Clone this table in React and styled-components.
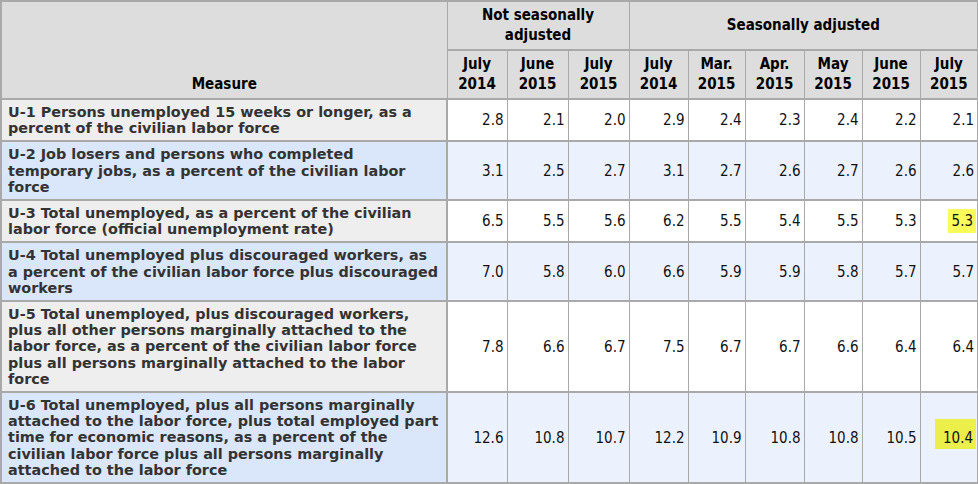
import React from 'react';
import styled, { createGlobalStyle } from 'styled-components';

const GlobalStyle = createGlobalStyle`
  body {
    margin: 0;
    background: #ffffff;
    font-family: 'DejaVu Sans Condensed', 'DejaVu Sans', sans-serif;
  }
`;

const Table = styled.table`
  width: 977px;
  table-layout: fixed;
  border-collapse: collapse;
  border: 2px solid #a9a9a9;
  font-family: 'DejaVu Sans Condensed', 'DejaVu Sans', sans-serif;
`;

const HeadCell = styled.th`
  background: #dddddd;
  border: 1px solid #a9a9a9;
  border-bottom-width: 2px;
  color: #000;
  font-size: 15px;
  font-weight: 700;
  line-height: 20px;
  padding: 3px 2px 4px;
  text-align: center;
  vertical-align: ${(p) => (p.$bottom ? 'bottom' : 'middle')};
`;

const LabelCell = styled.th`
  background: ${(p) => (p.$alt ? '#dae7fb' : '#eeeeee')};
  border: 1px solid #a9a9a9;
  border-top-width: 2px;
  border-right-width: 2px;
  color: #333333;
  font-family: 'DejaVu Sans', sans-serif;
  font-size: 14.4px;
  font-weight: 700;
  line-height: 16.2px;
  padding: 4px 5px 4px 6px;
  text-align: left;
  vertical-align: top;
`;

const ValueCell = styled.td`
  background: ${(p) => (p.$alt ? '#ecf2fd' : '#ffffff')};
  border: 1px solid #a9a9a9;
  border-top-width: 2px;
  color: #111111;
  font-size: 15px;
  line-height: 16px;
  padding: 4px 3px 4px 2px;
  text-align: right;
  vertical-align: middle;
`;

const Highlight = styled.span`
  display: inline-block;
  background: ${(p) => p.$tone};
  padding: ${(p) => (p.$tall ? '11px 3px 3px 8px' : '4px 3px 4px 4px')};
  margin-top: ${(p) => (p.$tall ? '-8px' : '0')};
  margin-right: -2px;
`;

const groups = [
  { label: 'Not seasonally adjusted', span: 3 },
  { label: 'Seasonally adjusted', span: 6 },
];

const months = [
  ['July', '2014'],
  ['June', '2015'],
  ['July', '2015'],
  ['July', '2014'],
  ['Mar.', '2015'],
  ['Apr.', '2015'],
  ['May', '2015'],
  ['June', '2015'],
  ['July', '2015'],
];

const widths = [446, 60, 61, 61, 59, 57, 59, 58, 58, 58];

const rows = [
  {
    label: 'U-1 Persons unemployed 15 weeks or longer, as a percent of the civilian labor force',
    values: ['2.8', '2.1', '2.0', '2.9', '2.4', '2.3', '2.4', '2.2', '2.1'],
  },
  {
    label: 'U-2 Job losers and persons who completed temporary jobs, as a percent of the civilian labor force',
    values: ['3.1', '2.5', '2.7', '3.1', '2.7', '2.6', '2.7', '2.6', '2.6'],
  },
  {
    label: 'U-3 Total unemployed, as a percent of the civilian labor force (official unemployment rate)',
    values: ['6.5', '5.5', '5.6', '6.2', '5.5', '5.4', '5.5', '5.3', '5.3'],
    mark: { tone: '#fbfb5c', tall: false },
  },
  {
    label: 'U-4 Total unemployed plus discouraged workers, as a percent of the civilian labor force plus discouraged workers',
    values: ['7.0', '5.8', '6.0', '6.6', '5.9', '5.9', '5.8', '5.7', '5.7'],
  },
  {
    label: 'U-5 Total unemployed, plus discouraged workers, plus all other persons marginally attached to the labor force, as a percent of the civilian labor force plus all persons marginally attached to the labor force',
    values: ['7.8', '6.6', '6.7', '7.5', '6.7', '6.7', '6.6', '6.4', '6.4'],
  },
  {
    label: 'U-6 Total unemployed, plus all persons marginally attached to the labor force, plus total employed part time for economic reasons, as a percent of the civilian labor force plus all persons marginally attached to the labor force',
    values: ['12.6', '10.8', '10.7', '12.2', '10.9', '10.8', '10.8', '10.5', '10.4'],
    mark: { tone: '#ecef4a', tall: true },
  },
];

export default function App() {
  return (
    <>
      <GlobalStyle />
      <Table>
        <colgroup>
          {widths.map((w, i) => (
            <col key={i} style={{ width: w }} />
          ))}
        </colgroup>
        <thead>
          <tr>
            <HeadCell rowSpan={2} $bottom>Measure</HeadCell>
            {groups.map((g) => (
              <HeadCell key={g.label} colSpan={g.span}>
                {g.label === 'Not seasonally adjusted' ? (
                  <>Not seasonally<br />adjusted</>
                ) : (
                  g.label
                )}
              </HeadCell>
            ))}
          </tr>
          <tr>
            {months.map(([m, y], i) => (
              <HeadCell key={i}>
                {m}
                <br />
                {y}
              </HeadCell>
            ))}
          </tr>
        </thead>
        <tbody>
          {rows.map((r, ri) => (
            <tr key={ri}>
              <LabelCell $alt={ri % 2 === 1}>{r.label}</LabelCell>
              {r.values.map((v, vi) => (
                <ValueCell key={vi} $alt={ri % 2 === 1}>
                  {r.mark && vi === r.values.length - 1 ? (
                    <Highlight $tone={r.mark.tone} $tall={r.mark.tall}>{v}</Highlight>
                  ) : (
                    v
                  )}
                </ValueCell>
              ))}
            </tr>
          ))}
        </tbody>
      </Table>
    </>
  );
}
